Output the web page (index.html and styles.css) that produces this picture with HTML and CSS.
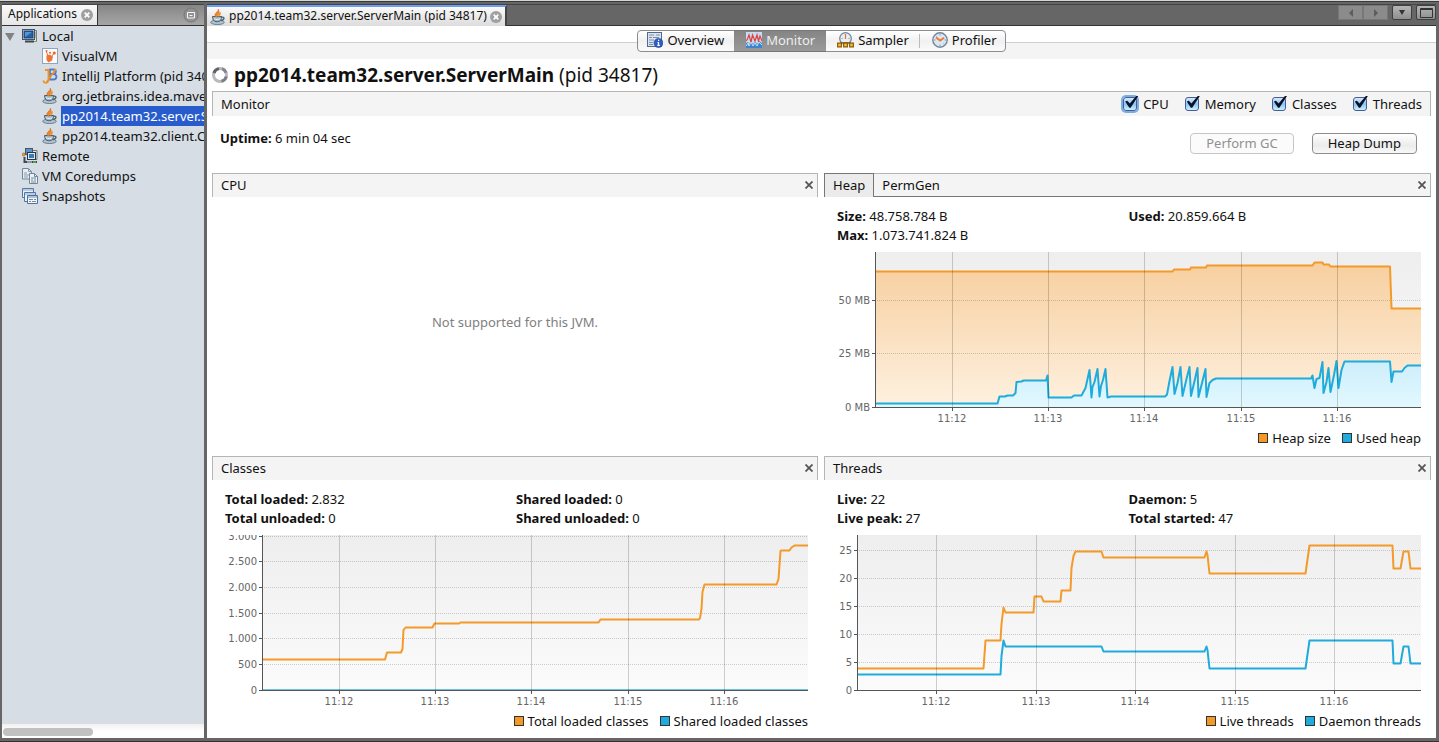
FILE: index.html
```html
<!DOCTYPE html>
<html lang="en">
<head>
<meta charset="utf-8">
<title>VisualVM</title>
<link rel="stylesheet" href="styles.css">
</head>
<body>
<svg class="defs" aria-hidden="true">
  <defs>
    <linearGradient id="plotBg" x1="0" y1="0" x2="0" y2="1"><stop offset="0" stop-color="#eeeeee"/><stop offset="1" stop-color="#fbfbfb"/></linearGradient>
    <linearGradient id="heapFill" x1="0" y1="0" x2="0" y2="1"><stop offset="0" stop-color="#f7cf9f"/><stop offset="1" stop-color="#fef1e0"/></linearGradient>
    <linearGradient id="usedFill" x1="0" y1="0" x2="0" y2="1"><stop offset="0" stop-color="#cdeefb"/><stop offset="1" stop-color="#e2f8ff"/></linearGradient>
    <symbol id="java" viewBox="0 0 16 16">
      <ellipse cx="7.500" cy="13.300" rx="6.800" ry="2.200" fill="#b4c4ce" stroke="#5d7484" stroke-width=".9"/>
      <path d="M2.500 7.500h9c0 3-1 5.300-4.400 5.300S2.500 10.500 2.500 7.500z" fill="#9db8c9" stroke="#48606f" stroke-width="1"/>
      <path d="M11.300 8.200c3.600-.8 3.800 2.800-.8 3.300" fill="none" stroke="#48606f" stroke-width="1.300"/>
      <path d="M4 9.800c2 .8 4.500.8 6.500 0" fill="none" stroke="#eef6fa"/>
      <path d="M8 0c2.200 2-3.900 3.300-3 7 .3 1 1.600 1.400 2.400.8-.9-2.700 3.800-3.400.6-7.800z" fill="#f08322" stroke="#c9600e" stroke-width=".5"/>
      <path d="M10.600 3c-2.600 1-3 2.600-2 5 2-1.600 2.500-3 2-5z" fill="#f08a2c"/>
    </symbol>
    <symbol id="x" viewBox="0 0 8 8"><path d="M.5.500l7 7M7.500.500l-7 7" stroke="#555" stroke-width="1.800" fill="none"/></symbol>
    <symbol id="close" viewBox="0 0 12 12"><circle cx="6" cy="6" r="6" fill="#a0a0a0"/><path d="M3.700 3.700l4.600 4.600M8.300 3.700L3.700 8.300" stroke="#fff" stroke-width="1.700"/></symbol>
  </defs>
</svg>

<div class="window">
  <aside class="sidebar">
    <header class="strip side-strip">
      <div class="side-tab"><span>Applications</span><button class="round" aria-label="Close Applications"><svg width="12" height="12"><use href="#close"/></svg></button></div>
      <button class="minimize" aria-label="Minimize"><svg width="16" height="16" viewBox="0 0 16 16"><circle cx="8" cy="8" r="7" fill="#929292" stroke="#777"/><path d="M4.500 5.500h7v5.500h-7zM6.500 8.500h3" fill="none" stroke="#f5f5f5"/></svg></button>
    </header>
    <ul class="tree">
      <li class="node"><svg class="arrow" width="10" height="8" viewBox="0 0 10 8"><path d="M0 0h9.500L5 8z" fill="#828282"/></svg>
        <svg width="16" height="16" viewBox="0 0 16 16"><path d="M12 2.500h2.500v11H6" fill="#e4e4df" stroke="#777"/><path d="M13 5h2M13 7h2M13 9h2" stroke="#888"/><rect x=".5" y="1.500" width="12" height="10" fill="#dfe6ea" stroke="#43546a"/><rect x="2" y="3" width="9" height="7" fill="#2562a8" stroke="#183e73"/><path d="M3 4h7L3 9z" fill="#5795d0"/><path d="M3 13.500h9" stroke="#3a4653" stroke-width="2"/><path d="M12 13.500h2" stroke="#61bd33"/></svg><span>Local</span></li>
      <li class="node child"><svg width="16" height="16" viewBox="0 0 16 16"><rect x=".5" y=".5" width="15" height="15" fill="#f8fafb" stroke="#8fa6ba"/><path d="M4.500 7.500l3-1 3.500 2-1 4-3.500 2L4.500 12z" fill="#f17334"/><path d="M6 8L4.500 4M10 8l2-3" stroke="#f17334"/><circle cx="4.500" cy="3" r="1" fill="#ee6025"/><circle cx="8" cy="4.700" r="1" fill="#ee6025"/><circle cx="12.300" cy="5" r="1.500" fill="#ee6025"/></svg><span>VisualVM</span></li>
      <li class="node child"><svg width="16" height="16" viewBox="0 0 16 16"><path d="M8 1.500h3.500c3.300 0 3 4.500 0 4.500 4 0 3.800 5.500 0 5.500H8zM8 6h3.500" fill="none" stroke="#4f7cc9" stroke-width="1.800"/><path d="M3 2h3.500v9c0 5-5 5-5 1.500M14 1L4 15" fill="none" stroke="#ee9126" stroke-width="1.800"/></svg><span>IntelliJ Platform (pid 340</span></li>
      <li class="node child"><svg width="16" height="16"><use href="#java"/></svg><span>org.jetbrains.idea.maver</span></li>
      <li class="node child selected"><svg width="16" height="16"><use href="#java"/></svg><span>pp2014.team32.server.S</span></li>
      <li class="node child"><svg width="16" height="16"><use href="#java"/></svg><span>pp2014.team32.client.C</span></li>
      <li class="node"><svg width="16" height="16" viewBox="0 0 16 16"><rect x="3.500" y=".5" width="7" height="6" fill="#5e91c6" stroke="#465564"/><path d="M11 2.500h4v9h-3" fill="#e5e5dd" stroke="#777"/><rect x="5.500" y="4.500" width="8" height="7" fill="#dfe6ea" stroke="#25394e"/><rect x="7" y="6" width="5" height="4" fill="#387bbd"/><path d="M2.500 9v5H15" fill="none" stroke="#3e4b59" stroke-width="2"/><path d="M5 14h5" stroke="#dce9f3"/><circle cx="1.700" cy="6.500" r="1.500" fill="#eca22c" stroke="#8d6120" stroke-width=".6"/><path d="M11 14h3" stroke="#65be37" stroke-width="1.500"/></svg><span>Remote</span></li>
      <li class="node"><svg width="16" height="16" viewBox="0 0 16 16"><path d="M.5.500h6l3 3V11h-9z" fill="#e7edf3" stroke="#72859a"/><path d="M6.500.500v3h3M2 5h3M2 7h5M2 9h4" fill="none" stroke="#8899ab"/><path d="M7.500 5.500h5l3 3v7h-8z" fill="#edf2f6" stroke="#72859a"/><path d="M12.500 5.500v3h3M9 10h5M9 12h2M12 12h2M9 14h5" fill="none" stroke="#71879d"/></svg><span>VM Coredumps</span></li>
      <li class="node"><svg width="16" height="16" viewBox="0 0 16 16"><path d="M.5.500h11v9H.500z" fill="#edf2f7" stroke="#5277a6"/><path d="M1 2h10" stroke="#86a6cb"/><path d="M2.500 4.500h11v9h-11z" fill="#edf2f7" stroke="#5277a6"/><path d="M3 6h10" stroke="#86a6cb"/><path d="M5.500 7.500h10v8h-10z" fill="#f3f5f7" stroke="#4f729d"/><path d="M6 9h9M7 11.500h4M12 11.500h2M7 13.500h2M10 13.500h4" stroke="#728ba8"/></svg><span>Snapshots</span></li>
    </ul>
    <div class="scroll"><div class="thumb"></div></div>
  </aside>

  <main class="main">
    <header class="strip main-strip">
      <div class="doc-tab"><svg width="16" height="16"><use href="#java"/></svg><span>pp2014.team32.server.ServerMain (pid 34817)</span><button class="round" aria-label="Close tab"><svg width="12" height="12"><use href="#close"/></svg></button></div>
      <div class="win-buttons">
        <div class="pair"><button class="wb dim" aria-label="Previous"><svg width="6" height="8" viewBox="0 0 6 8"><path d="M5 0v8L1 4z" fill="#5c5c5c"/></svg></button><button class="wb dim" aria-label="Next"><svg width="6" height="8" viewBox="0 0 6 8"><path d="M1 0v8l4-4z" fill="#5c5c5c"/></svg></button></div>
        <button class="wb narrow" aria-label="Tab list"><svg width="6" height="5" viewBox="0 0 6 5"><path d="M0 0h6L3 5z" fill="#333"/></svg></button>
        <button class="wb narrow" aria-label="Maximize"><svg width="13" height="10" viewBox="0 0 13 10"><path d="M.5.500h12v9H.500zM1 1.500h11" fill="none" stroke="#333"/></svg></button>
      </div>
    </header>

    <nav class="views">
      <div class="segments">
        <button class="seg"><svg width="16" height="16" viewBox="0 0 16 16"><rect x=".5" y=".5" width="14" height="14" fill="#dbe5f1" stroke="#52698a"/><path d="M2 3h5M9 3h4M2 5.500h3M6 5.500h6M2 8h5M2 10.500h4M2 12.500h4" stroke="#7f90a4"/><circle cx="11.500" cy="11" r="4.500" fill="#2c5fc3" stroke="#1d438f" stroke-width=".6"/><path d="M11.500 10v3.500M10.500 10.500h1M10.300 13.400h2.500M11 8.300h1.200" stroke="#fff" stroke-width="1.200"/></svg>Overview</button>
        <button class="seg active"><svg width="16" height="16" viewBox="0 0 16 16"><rect width="16" height="16" fill="#c6dcf0"/><path d="M0 11l2-1 1 2 2-3 2 3 2-2 2 2 2-3 3 2v5H0z" fill="#3d86cc"/><path d="M0 9l1.500-2L3 3l2 7 1.500-7L9 9l2-6 1.500 6L14 4l2 5" fill="none" stroke="#e2403f" stroke-width="1.200"/><path d="M0 14l2-3 1 3 2-4 2 4 2-3 2 3 2-4 3 3" fill="none" stroke="#e8f3fb" stroke-width=".8"/></svg>Monitor</button>
        <button class="seg sampler"><svg width="17" height="16" viewBox="0 0 17 16"><circle cx="8.500" cy="6.500" r="5.800" fill="#e6eff7" stroke="#7188a0" stroke-width="1.300"/><path d="M8.500 2v5M4.500 6.500h1M11.500 6.500h1" stroke="#e07533" stroke-width="1.200"/><path d="M3 10.500h11" stroke="#9b6b17"/><path d="M.6 11.100h3.800v3.800H.600zM6.600 11.100h3.800v3.800H6.600zM12.600 11.100h3.800v3.800h-3.800z" fill="#f3bd3c" stroke="#8f5d0c" stroke-width="1.200"/></svg>Sampler</button>
        <button class="seg last"><svg width="16" height="16" viewBox="0 0 16 16"><circle cx="8" cy="8" r="7.200" fill="#d9e8f5" stroke="#75869a" stroke-width="1.400"/><path d="M8 2v1.500M8 12.500V14M2 8h1.500M12.500 8H14M3.800 3.800l.8.8M11.500 11.500l.8.800" stroke="#8798ab"/><path d="M4 5.500l4.200 3L12 5.800" fill="none" stroke="#f07a2e" stroke-width="2"/></svg>Profiler</button>
      </div>
    </nav>

    <div class="title"><svg width="16" height="16" viewBox="0 0 16 16"><circle cx="8" cy="8" r="6.500" fill="none" stroke="#b9b9be" stroke-width="3"/><path d="M2 6a6.500 6.500 0 0 1 5-4.400" fill="none" stroke="#606068" stroke-width="3"/><path d="M14.300 9.500a6.500 6.500 0 0 1-4.800 4.800" fill="none" stroke="#7c7c86" stroke-width="3"/><path d="M10 1.700a6.500 6.500 0 0 1 4 4" fill="none" stroke="#85858e" stroke-width="3"/></svg><h1><b>pp2014.team32.server.ServerMain</b> (pid 34817)</h1></div>

    <section class="content">
      <div class="bar bar-main">
        <h2>Monitor</h2>
        <div class="checks">
          <label class="focus"><input type="checkbox" checked>CPU</label>
          <label><input type="checkbox" checked>Memory</label>
          <label><input type="checkbox" checked>Classes</label>
          <label><input type="checkbox" checked>Threads</label>
        </div>
      </div>
      <div class="info">
        <p><b>Uptime:</b> 6 min 04 sec</p>
        <div class="actions"><button class="push" disabled>Perform GC</button><button class="push">Heap Dump</button></div>
      </div>

      <div class="panels">
        <article class="panel">
          <div class="bar"><h2>CPU</h2><button class="x" aria-label="Close CPU"><svg width="8" height="8"><use href="#x"/></svg></button></div>
          <p class="empty">Not supported for this JVM.</p>
        </article>

        <article class="panel">
          <div class="bar tabbed"><button class="tab on">Heap</button><button class="tab">PermGen</button><button class="x" aria-label="Close Heap"><svg width="8" height="8"><use href="#x"/></svg></button></div>
          <div class="stats"><span><b>Size:</b> 48.758.784 B</span><span><b>Used:</b> 20.859.664 B</span><span><b>Max:</b> 1.073.741.824 B</span></div>
          <svg class="chart" viewBox="824 252 607 177" role="img" aria-label="Heap chart">
            <rect x="876" y="252" width="545" height="155" fill="url(#plotBg)"/>
            <path fill="url(#heapFill)" d="M876 271.500H1172.500L1174 269.500H1190L1191 267.500H1206L1207 265.500H1312.500L1314.500 262.500H1322.500L1323.500 264.500H1329L1330.500 266.500H1390L1391.500 308.500H1421V407H876z"/>
            <path fill="url(#usedFill)" d="M876 403.500H997.500L999.500 396.500H1005L1007.500 395.500H1013L1015.500 393L1016.500 382L1021.500 381.500L1023.500 380.500H1046L1047.500 375.500L1048.500 397.500H1071.500L1074 395.500H1081.500L1085.500 388L1089.500 370L1091.500 397.500L1092.500 387L1097.500 369L1099.500 396.500L1101 386L1105.500 369L1107.500 397.500L1111 396.500H1165L1167 394.500L1172.500 367L1174.500 394L1180.500 367L1182.500 396L1189.500 367L1191 396L1197.500 368L1198.500 397L1205.500 369L1206.500 397L1209.500 383L1216 378.500H1311L1312.500 375.500L1314.500 388L1316.500 379L1319.500 378L1322.500 362L1323.500 393L1328.500 368L1330.500 392L1336.500 361L1338.500 388L1341.500 370L1344.500 361.500H1390L1391.500 382L1393.500 371.500H1402L1404.500 368L1407.500 365.500H1421V407H876z"/>
            <path class="grid dot" d="M877 300.500H1421M877 353.500H1421"/>
            <path class="line orange" d="M876 271.500H1172.500L1174 269.500H1190L1191 267.500H1206L1207 265.500H1312.500L1314.500 262.500H1322.500L1323.500 264.500H1329L1330.500 266.500H1390L1391.500 308.500H1421"/>
            <path class="line blue" d="M876 403.500H997.500L999.500 396.500H1005L1007.500 395.500H1013L1015.500 393L1016.500 382L1021.500 381.500L1023.500 380.500H1046L1047.500 375.500L1048.500 397.500H1071.500L1074 395.500H1081.500L1085.500 388L1089.500 370L1091.500 397.500L1092.500 387L1094.500 382L1097.500 369L1099.500 396.500L1101 386L1103 380L1105.500 369L1107.500 397.500L1111 396.500H1165L1167 394.500L1169.500 381L1172.500 367L1174.500 394L1177.500 383L1180.500 367L1182.500 396L1186.500 379L1189.500 367L1191 396L1195 379L1197.500 368L1198.500 397L1202.500 381L1205.500 369L1206.500 397L1209.500 383L1212.500 380L1216 378.500H1311L1312.500 375.500L1314.500 388L1316.500 379L1319.500 378L1322.500 362L1323.500 393L1326.500 382L1328.500 368L1330.500 392L1334 375L1336.500 361L1338.500 388L1341.500 370L1344.500 361.500H1390L1391.500 382L1393.500 371.500H1402L1404.500 368L1407.500 365.500H1421"/>
            <path class="grid" d="M952.500 252V407M1048.500 252V407M1144.500 252V407M1241.500 252V407M1337.500 252V407"/>
            <path class="axis" d="M875.500 252V407.500H1421M872 300.500H876M872 353.500H876M872 407.500H876M952.500 407V411M1048.500 407V411M1144.500 407V411M1241.500 407V411M1337.500 407V411"/>
            <g class="ylab"><text x="870" y="304">50 MB</text><text x="870" y="357">25 MB</text><text x="870" y="411">0 MB</text></g>
            <g class="xlab"><text x="952" y="422">11:12</text><text x="1048" y="422">11:13</text><text x="1144" y="422">11:14</text><text x="1241" y="422">11:15</text><text x="1337" y="422">11:16</text></g>
          </svg>
          <div class="legend"><span><i class="sw o"></i>Heap size</span><span><i class="sw b"></i>Used heap</span></div>
        </article>

        <article class="panel">
          <div class="bar"><h2>Classes</h2><button class="x" aria-label="Close Classes"><svg width="8" height="8"><use href="#x"/></svg></button></div>
          <div class="stats"><span><b>Total loaded:</b> 2.832</span><span><b>Shared loaded:</b> 0</span><span><b>Total unloaded:</b> 0</span><span><b>Shared unloaded:</b> 0</span></div>
          <svg class="chart" viewBox="212 535 606 177" role="img" aria-label="Classes chart">
            <rect x="263" y="535" width="545" height="155" fill="url(#plotBg)"/>
            <path class="grid dot" d="M264 536.500H808M264 561.500H808M264 587.500H808M264 613.500H808M264 638.500H808M264 664.500H808"/>
            <path class="thin" d="M263 689.500H808"/>
            <path class="line orange" d="M263 659.500H385L387 652.500H401L402.500 649L403.500 630L405.500 627.500H432.500L434.500 623.500H459L460.500 622.500H598.500L600.500 619.500H699L700 618L701.500 609L702.500 592L704.500 584.500H776.500L778.500 579L780.500 551L781.500 550.500H789.500L791.500 547.500L794.500 545.500H808"/>
            <path class="grid" d="M339.500 535V690M435.500 535V690M531.500 535V690M628.500 535V690M724.500 535V690"/>
            <path class="axis" d="M262.500 535V690.500H808M259 536.500H263M259 561.500H263M259 587.500H263M259 613.500H263M259 638.500H263M259 664.500H263M259 690.500H263M339.500 690V694M435.500 690V694M531.500 690V694M628.500 690V694M724.500 690V694"/>
            <g class="ylab"><text x="257" y="540">3.000</text><text x="257" y="565">2.500</text><text x="257" y="591">2.000</text><text x="257" y="617">1.500</text><text x="257" y="642">1.000</text><text x="257" y="668">500</text><text x="257" y="694">0</text></g>
            <g class="xlab"><text x="339" y="705">11:12</text><text x="435" y="705">11:13</text><text x="531" y="705">11:14</text><text x="628" y="705">11:15</text><text x="724" y="705">11:16</text></g>
          </svg>
          <div class="legend"><span><i class="sw o"></i>Total loaded classes</span><span><i class="sw b"></i>Shared loaded classes</span></div>
        </article>

        <article class="panel">
          <div class="bar"><h2>Threads</h2><button class="x" aria-label="Close Threads"><svg width="8" height="8"><use href="#x"/></svg></button></div>
          <div class="stats"><span><b>Live:</b> 22</span><span><b>Daemon:</b> 5</span><span><b>Live peak:</b> 27</span><span><b>Total started:</b> 47</span></div>
          <svg class="chart" viewBox="824 535 607 177" role="img" aria-label="Threads chart">
            <rect x="858" y="535" width="563" height="155" fill="url(#plotBg)"/>
            <path class="grid dot" d="M859 550.500H1421M859 578.500H1421M859 606.500H1421M859 634.500H1421M859 662.500H1421"/>
            <path class="line orange" d="M858 668.500H983.500L985.500 640.500H1000.500L1001.500 624L1003.500 607.500L1005.500 612.500H1033.500L1034.500 596.500H1041.500L1043.500 601.500H1060.500L1061.500 590.500H1070.500L1071.500 568L1073.500 556L1075.500 551.500H1101.500L1103.500 557.500H1204.500L1206.500 551.500L1207.500 555L1209.500 573.500H1305.500L1309.500 545.500H1392.500L1393.500 568.500H1400.500L1403.500 551.500H1408.500L1410.500 568.500H1421"/>
            <path class="line blue" d="M858 674.500H1000.500L1001.500 656L1003.500 640.500L1005.500 646.500H1101.500L1103.500 651.500H1204.500L1206.500 646.500L1207.500 650L1209.500 668.500H1305.500L1309.500 640.500H1392.500L1393.500 663.500H1400.500L1403.500 646.500H1408.500L1410.500 663.500H1421"/>
            <path class="grid" d="M936.500 535V690M1036.500 535V690M1135.500 535V690M1235.500 535V690M1334.500 535V690"/>
            <path class="axis" d="M857.500 535V690.500H1421M854 550.500H858M854 578.500H858M854 606.500H858M854 634.500H858M854 662.500H858M854 690.500H858M936.500 690V694M1036.500 690V694M1135.500 690V694M1235.500 690V694M1334.500 690V694"/>
            <g class="ylab"><text x="852" y="554">25</text><text x="852" y="582">20</text><text x="852" y="610">15</text><text x="852" y="638">10</text><text x="852" y="666">5</text><text x="852" y="694">0</text></g>
            <g class="xlab"><text x="936" y="705">11:12</text><text x="1036" y="705">11:13</text><text x="1135" y="705">11:14</text><text x="1235" y="705">11:15</text><text x="1334" y="705">11:16</text></g>
          </svg>
          <div class="legend"><span><i class="sw o"></i>Live threads</span><span><i class="sw b"></i>Daemon threads</span></div>
        </article>
      </div>
    </section>
  </main>
</div>
</body>
</html>
```
FILE: styles.css
```css
* { box-sizing: border-box; }
body { margin: 0; background: #666; color: #111; font: 13px/20px "Noto Sans", sans-serif; }
button { font: inherit; color: inherit; margin: 0; padding: 0; border: 0; background: none; }
h1, h2, p, ul { margin: 0; padding: 0; font-size: inherit; font-weight: inherit; }
svg { display: block; flex: none; }
.defs { position: absolute; width: 0; height: 0; }

.window { display: flex; gap: 3px; min-height: 100vh; padding: 3px 3px 3px 2px; border-top: 1px solid #d2d8d6; border-bottom: 1px solid #333; box-shadow: inset 0 1px #3a3a3a; }
.strip { display: flex; justify-content: space-between; height: 22px; border-bottom: 1px solid #333; }

.sidebar { display: flex; flex-direction: column; flex: none; width: 202px; overflow: hidden; background: #d6dde5; }
.side-strip { align-items: center; background: linear-gradient(#868686, #a6a6a6); border-top: 1px solid #444; padding-right: 5px; }
.side-tab { display: flex; align-items: center; gap: 4px; height: 20px; padding: 0 4px 0 6px; font-size: 12px; line-height: 18px; background: linear-gradient(#fafafa, #e6e6e6); border-right: 1px solid #333; }
.side-tab span, .doc-tab span { padding-bottom: 2px; }
.tree { flex: 1; list-style: none; }
.node { display: flex; align-items: center; gap: 4px; height: 20px; padding-left: 20px; white-space: nowrap; position: relative; }
.node.child { padding-left: 40px; gap: 3px; }
.node span { flex: 1; min-width: 0; overflow: hidden; }
.node.child span { padding-left: 1px; }
.selected span { background: #285ccd; color: #fff; }
.arrow { position: absolute; left: 3px; top: 7px; }
.scroll { height: 15px; padding: 4px 1px; background: linear-gradient(#f0f0f0, #fff 50%); border-top: 1px solid #ddd; }
.thumb { width: 45%; height: 8px; border-radius: 4px; background: #c1c1c1; }

.main { flex: 1; min-width: 0; display: flex; flex-direction: column; background: #fff; }
.main-strip { background: #666; border-top: 1px solid #444; }
.doc-tab { display: flex; align-items: center; gap: 3px; padding: 0 3px; font-size: 12px; line-height: 18px; height: 21px; background: linear-gradient(#fafafa, #dcdcdc); border-top: 2px solid #6f9ff5; border-right: 2px solid #444; white-space: nowrap; }
.win-buttons { display: flex; gap: 4px; height: 15px; }
.pair { display: flex; }
.wb { display: grid; place-items: center; width: 25px; height: 15px; border: 1px solid #555; background: linear-gradient(#b5b5b5, #8f8f8f); }
.wb.dim { background: #8b8b8b; border-color: #777; }
.wb.narrow { width: 20px; border-color: #3f3f3f; border-radius: 2px; }

.views { display: flex; justify-content: center; padding: 4px 0 7px; background: linear-gradient(#fff 16px, #cfcfcf 16px, #cfcfcf 17px, #f4f4f4 17px); }
.segments { display: flex; height: 22px; border: 1px solid #8c8c8c; border-radius: 4px; background: linear-gradient(#fff, #f1f1f1 50%, #fafafa); }
.seg { display: flex; align-items: center; gap: 4px; padding: 0 10px 2px 9px; }
.seg.active { background: linear-gradient(#858585, #999); color: #eee; margin: -1px 0; padding: 0 11px 2px 12px; border: 1px solid #777; border-width: 1px 0; }
.seg.sampler { padding-left: 11px; }
.seg.last { background: linear-gradient(#bbb, #bbb) 0 50% / 1px 14px no-repeat; padding-left: 13px; padding-right: 8px; }

.title { display: flex; align-items: center; gap: 6px; height: 32px; padding-left: 5px; }
.title h1 { font-size: 19px; line-height: 24px; }

.content { display: flex; flex-direction: column; padding: 0 5px 8px; }
.bar { display: flex; align-items: center; justify-content: space-between; height: 24px; padding: 0 4px 2px 8px; background: #f4f4f4; border: 1px solid #b5b5b5; border-bottom: 0; }
.bar-main { height: 25px; padding-bottom: 1px; }
.checks { display: flex; gap: 16px; padding-right: 4px; }
.checks label { display: flex; align-items: center; gap: 6px; }
.checks input { appearance: none; position: relative; width: 14px; height: 14px; margin: 0; border: 1px solid #4a5b94; border-radius: 3px; background: linear-gradient(#d7ebfc, #8bc3f5 50%, #c9f1ff); }
.checks input::after { content: ""; position: absolute; left: 1px; top: -2px; width: 13px; height: 13px; background: #0b1226; clip-path: polygon(0 46%, 16% 40%, 36% 62%, 88% 0, 100% 6%, 42% 94%, 32% 94%); }
.focus input { box-shadow: 0 0 0 2px #78aee4; }
.info { display: flex; justify-content: space-between; height: 57px; padding: 12px 14px 0 8px; }
.actions { display: flex; gap: 18px; padding-top: 5px; }
.push { height: 21px; padding: 0 15px; line-height: 19px; border: 1px solid #8d8d8d; border-radius: 4px; background: linear-gradient(#fff, #ececec 60%, #f8f8f8); }
.push:disabled { color: #909090; border-color: #c6c6c6; background: #fbfbfb; }

.panels { display: grid; grid-template-columns: minmax(0, 606fr) minmax(0, 607fr); gap: 9px 6px; }
.panel { display: flex; flex-direction: column; min-width: 0; }
.x { margin-left: auto; }
.tabbed { padding-left: 0; padding-bottom: 0; border-bottom: 1px solid #777; align-items: stretch; }
.tab { padding: 0 8px; }
.tab.on { background: #ebebeb; border: 1px solid #777; border-width: 1px 1px 0; margin: -1px 0 -1px -1px; padding-bottom: 2px; }
.empty { flex: 1; display: grid; place-items: center; color: #808080; }
.stats { display: grid; grid-template-columns: 1fr 1fr; grid-auto-rows: 19px; line-height: 19px; padding: 10px 11px 7px 13px; }
.chart { width: 100%; height: auto; }
.legend { display: flex; justify-content: flex-end; gap: 11px; height: 18px; line-height: 18px; padding-right: 10px; }
.legend span { display: flex; align-items: center; gap: 4px; }
.sw { width: 10px; height: 10px; border: 1px solid #333; }
.sw.o { background: #f39a26; }
.sw.b { background: #1fabdb; }

.grid { fill: none; stroke: #000; stroke-opacity: .18; }
.dot { stroke-dasharray: 1 1; }
.axis { fill: none; stroke: #555; }
.line { fill: none; stroke-width: 2; stroke-linejoin: round; }
.thin { stroke: #6cc4e0; }
.orange { stroke: #f39a2b; }
.blue { stroke: #1fabdb; }
.ylab, .xlab { font-family: "DejaVu Sans", sans-serif; font-size: 10px; fill: #666; }
.ylab { text-anchor: end; }
.xlab { text-anchor: middle; }
```
